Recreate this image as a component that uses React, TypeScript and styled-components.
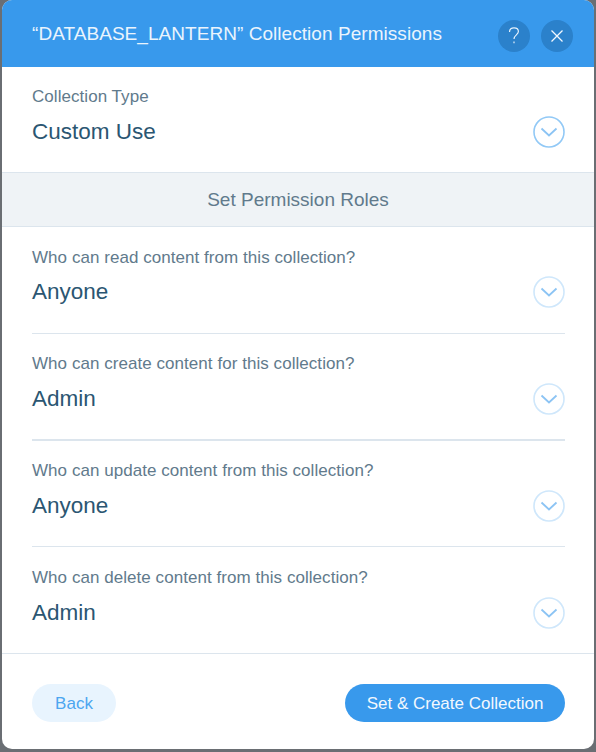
import React from "react";
import styled, { createGlobalStyle } from "styled-components";

const Global = createGlobalStyle`
  html, body { margin: 0; padding: 0; height: 100%; background: #6a6e73; }
  #root { height: 100%; }
  * { box-sizing: border-box; }
`;

const Page = styled.div`
  width: 596px;
  height: 752px;
  padding: 0 2px 3px 2px;
  font-family: "Liberation Sans", Arial, sans-serif;
  overflow: hidden;
`;

const Modal = styled.div`
  width: 592px;
  height: 749px;
  background: #fff;
  border-radius: 10px;
  overflow: hidden;
  display: flex;
  flex-direction: column;
`;

const Header = styled.header`
  height: 67px;
  flex: none;
  background: #3899ec;
  display: flex;
  align-items: center;
  padding: 0 21px 0 30px;
`;

const Title = styled.h1`
  flex: 1;
  margin: 0;
  font-size: 19px;
  font-weight: 400;
  letter-spacing: 0.05px;
  color: #eaf4fd;
  white-space: nowrap;
`;

const HeaderActions = styled.div`
  display: flex;
  gap: 11px;
  margin-top: 5px;
`;

const RoundButton = styled.button`
  width: 32px;
  height: 32px;
  padding: 0;
  border: 0;
  border-radius: 50%;
  background: #2b81cb;
  color: #fff;
  display: flex;
  align-items: center;
  justify-content: center;
`;

const Field = styled.div<{ $h: number; $line?: number; $top: number }>`
  height: ${p => p.$h}px;
  flex: none;
  margin: 0 29px 0 30px;
  padding-top: ${p => p.$top}px;
  position: relative;
  border-bottom: ${p => p.$line ?? 0}px solid #dce5ed;
`;

const Label = styled.div`
  font-size: 17px;
  line-height: 20px;
  letter-spacing: 0.05px;
  color: #617a8c;
`;

const Value = styled.div<{ $gap: number }>`
  margin-top: ${p => p.$gap}px;
  font-size: 22.5px;
  line-height: 30px;
  color: #2b5672;
`;

const Arrow = styled.span<{ $top: number }>`
  position: absolute;
  right: 0;
  top: ${p => p.$top}px;
  display: flex;
`;

const Band = styled.div`
  height: 55px;
  flex: none;
  background: #eff3f6;
  border-top: 1px solid #dce5ed;
  border-bottom: 1px solid #dce5ed;
  display: flex;
  align-items: center;
  justify-content: center;
  font-size: 19px;
  color: #617a8c;
`;

const Footer = styled.footer`
  flex: 1;
  display: flex;
  justify-content: space-between;
  padding: 30px 29px 0 30px;
  border-top: 1px solid #dce5ed;
`;

const Pill = styled.button<{ $primary?: boolean }>`
  height: 38px;
  width: ${p => (p.$primary ? 220 : 84)}px;
  border: 0;
  border-radius: 19px;
  padding: 2px 0 0;
  font-family: inherit;
  font-size: 17px;
  background: ${p => (p.$primary ? "#3899ec" : "#e8f4fe")};
  color: ${p => (p.$primary ? "#f2f8fe" : "#4ca6f0")};
`;

const Chevron = ({ strong }: { strong?: boolean }) => (
  <svg width="32" height="32" viewBox="0 0 32 32" fill="none">
    <circle cx="16" cy="16" r="15" stroke={strong ? "#92c9f6" : "#cfe7fb"} strokeWidth="1.6" />
    <path d="M8.5 12.5 L16 19.5 L23.5 12.5" stroke="#8cc4f4" strokeWidth="1.8" />
  </svg>
);

const questions = [
  { q: "Who can read content from this collection?", a: "Anyone", h: 107, line: 1, top: 21, gap: 9, arrow: 49 },
  { q: "Who can create content for this collection?", a: "Admin", h: 107, line: 2, top: 20, gap: 10, arrow: 49 },
  { q: "Who can update content from this collection?", a: "Anyone", h: 106, line: 1, top: 20, gap: 10, arrow: 49 },
  { q: "Who can delete content from this collection?", a: "Admin", h: 106, line: 0, top: 21, gap: 10, arrow: 50 },
];

export default function App() {
  return (
    <Page>
      <Global />
      <Modal>
        <Header>
          <Title>“DATABASE_LANTERN” Collection Permissions</Title>
          <HeaderActions>
            <RoundButton aria-label="Help">
              <svg width="14" height="20" viewBox="0 0 14 20" fill="none" stroke="#e6f2fc" strokeWidth="1.2">
                <path d="M2.5 6 C2.5 3 4.5 1.8 7 1.8 C9.6 1.8 11.4 3.4 11.4 5.6 C11.4 8.8 7 9 7 13" />
                <path d="M7 15.5 V17.2" />
              </svg>
            </RoundButton>
            <RoundButton aria-label="Close">
              <svg width="14" height="14" viewBox="0 0 14 14" fill="none" stroke="#f2f8fe" strokeWidth="1.3">
                <path d="M1.5 1.5 L12.5 12.5 M12.5 1.5 L1.5 12.5" />
              </svg>
            </RoundButton>
          </HeaderActions>
        </Header>
        <Field $h={105} $top={20}>
          <Label>Collection Type</Label>
          <Value $gap={10}>Custom Use</Value>
          <Arrow $top={49}><Chevron strong /></Arrow>
        </Field>
        <Band>Set Permission Roles</Band>
        {questions.map(r => (
          <Field key={r.q} $top={r.top} $h={r.h} $line={r.line}>
            <Label>{r.q}</Label>
            <Value $gap={r.gap}>{r.a}</Value>
            <Arrow $top={r.arrow}><Chevron /></Arrow>
          </Field>
        ))}
        <Footer>
          <Pill>Back</Pill>
          <Pill $primary>Set &amp; Create Collection</Pill>
        </Footer>
      </Modal>
    </Page>
  );
}
